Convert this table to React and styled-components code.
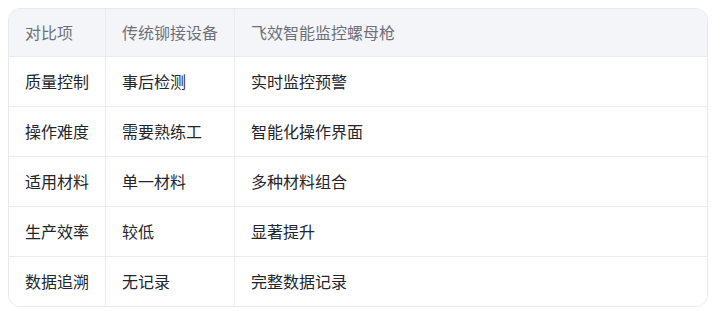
import React from 'react';
import styled, { createGlobalStyle } from 'styled-components';

const GlobalStyle = createGlobalStyle`
  body {
    margin: 8px;
    background: #ffffff;
    font-family: "Noto Sans CJK SC", "Noto Sans", sans-serif;
  }
`;

const Table = styled.div`
  width: 700px;
  display: grid;
  grid-template-columns: 97px 129px 1fr;
  border: 1px solid #e8e9ec;
  border-radius: 12px;
  overflow: hidden;
  box-sizing: border-box;
`;

const Cell = styled.div`
  padding: ${props => props.head ? '12px 16px' : '14px 16px'};
  font-size: 16px;
  line-height: ${props => props.head ? '23px' : '21px'};
  color: ${props => props.head ? '#6e7179' : '#24262b'};
  background: ${props => props.head ? '#f4f5f8' : '#ffffff'};
  border-bottom: ${props => props.last ? 'none' : '1px solid #ececef'};
  border-right: ${props => props.edge ? 'none' : '1px solid #ececef'};
`;

const header = ['对比项', '传统铆接设备', '飞效智能监控螺母枪'];

const rows = [
  ['质量控制', '事后检测', '实时监控预警'],
  ['操作难度', '需要熟练工', '智能化操作界面'],
  ['适用材料', '单一材料', '多种材料组合'],
  ['生产效率', '较低', '显著提升'],
  ['数据追溯', '无记录', '完整数据记录'],
];

const App = () => {
  return (
    <>
      <GlobalStyle />
      <Table>
        {header.map((text, i) => (
          <Cell head key={`h-${i}`} edge={i === 2}>{text}</Cell>
        ))}
        {rows.map((row, r) => row.map((text, i) => (
          <Cell
            key={`${r}-${i}`}
            edge={i === 2}
            last={r === rows.length - 1}
          >
            {text}
          </Cell>
        )))}
      </Table>
    </>
  );
};

export default App;
